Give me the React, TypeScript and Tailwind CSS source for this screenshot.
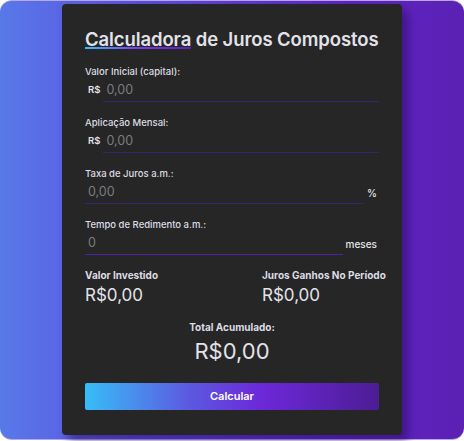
import React from "react";

function Field({
  label,
  prefix,
  suffix,
  placeholder,
  lineClass = "border-[#3a2270]",
}: {
  label: string;
  prefix?: string;
  suffix?: string;
  placeholder: string;
  lineClass?: string;
}) {
  return (
    <div className="flex flex-col">
      <label className="text-[9.5px] font-medium leading-[12px] text-[#dcdce4]">{label}</label>
      <div className="mt-[4px] flex items-start">
        {prefix && (
          <span className="ml-[3px] mr-[3px] mt-[2px] text-[9.5px] font-semibold leading-[12px] text-[#e4e4ea]">
            {prefix}
          </span>
        )}
        <div className={`flex-1 border-b ${lineClass} pb-[3px] pl-[3px] text-[12.5px] leading-[16px]`}>
          <span className="text-[#7c7c82]">{placeholder}</span>
        </div>
        {suffix && (
          <span className="ml-[3px] mt-[3px] text-[10px] font-medium leading-[12px] text-[#e4e4ea]">{suffix}</span>
        )}
      </div>
    </div>
  );
}

export default function App() {
  return (
    <div className="h-[441px] w-[464px] bg-white" style={{ fontFamily: "Inter, 'Open Sans', sans-serif" }}>
      <div className="flex h-[440px] w-[464px] justify-center rounded-[12px] border-y border-[#b9a8e8] bg-[linear-gradient(to_right,#5879e8,#5c4fe0_30%,#6024c4_75%,#5b21b4)] pt-[3px]">
        <div className="flex h-[431px] w-[340px] flex-col rounded-[4px] bg-[#262626] px-[23px] pt-[23px] shadow-[6px_6px_10px_rgba(40,10,100,0.55)]">
          <h1 className="text-[18.5px] font-semibold leading-[24px] tracking-[-0.1px] text-[#e2e2ea]">
            <span className="relative">
              Calculadora
              <span className="absolute bottom-[1px] left-0 h-[2px] w-full bg-[linear-gradient(to_right,#38bdf8,#7c3aed,#5b21b6)]" />
            </span>{" "}
            de Juros Compostos
          </h1>

          <div className="mt-[15px] flex flex-col gap-[15px]">
            <Field label="Valor Inicial (capital):" prefix="R$" placeholder="0,00" />
            <Field label="Aplicação Mensal:" prefix="R$" placeholder="0,00" />
            <div className="pr-[2px]">
              <Field label="Taxa de Juros a.m.:" suffix="%" placeholder="0,00" />
            </div>
            <div className="pr-[2px]">
              <Field label="Tempo de Redimento a.m.:" suffix="meses" placeholder="0" lineClass="border-[#4a24a8]" />
            </div>
          </div>

          <div className="mt-[14px] flex justify-between">
            <div className="flex flex-col">
              <span className="text-[10px] font-bold leading-[13px] text-[#dcdce4]">Valor Investido</span>
              <span className="mt-[2px] text-[17px] leading-[22px] text-[#e2e2ea]">R$0,00</span>
            </div>
            <div className="flex w-[117px] flex-col">
              <span className="whitespace-nowrap text-[10px] font-bold leading-[13px] text-[#dcdce4]">
                Juros Ganhos No Período
              </span>
              <span className="mt-[2px] text-[17px] leading-[22px] text-[#e2e2ea]">R$0,00</span>
            </div>
          </div>

          <div className="mt-[15px] flex flex-col items-center">
            <span className="text-[10px] font-bold leading-[13px] text-[#dcdce4]">Total Acumulado:</span>
            <span className="mt-[3px] text-[22px] leading-[28px] text-[#e2e2ea]">R$0,00</span>
          </div>

          <button className="mt-[18px] h-[27px] w-full rounded-[2px] bg-[linear-gradient(to_right,#38bdf8,#5b5ae0_35%,#6d28d9_60%,#4c1d95)] text-[11px] font-semibold text-white">
            Calcular
          </button>
        </div>
      </div>
    </div>
  );
}
